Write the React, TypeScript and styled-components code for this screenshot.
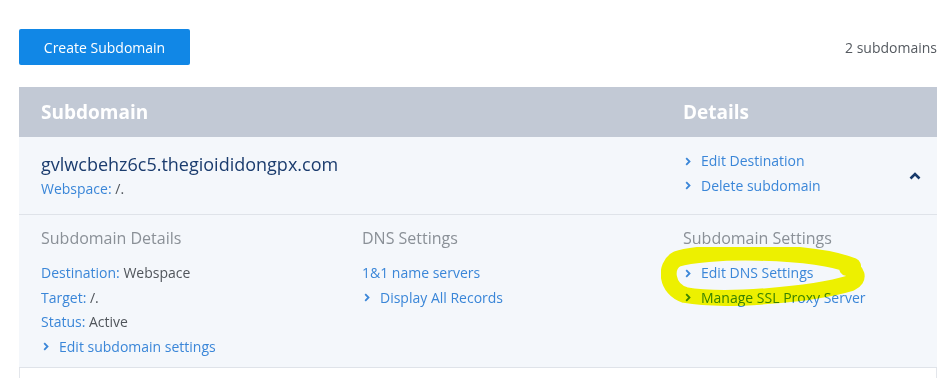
import * as React from "react";
import styled, { createGlobalStyle } from "styled-components";

const GlobalStyle = createGlobalStyle`
  body {
    margin: 0;
    background: #ffffff;
    font-family: "Open Sans", "Liberation Sans", sans-serif;
  }
`;

const LINK = "#3a86d8";

const Chevron: React.FC = () => (
  <svg width="6" height="9" viewBox="0 0 6 9">
    <path d="M1.2 1.2 L4.5 4.5 L1.2 7.8" fill="none" stroke={LINK} strokeWidth="1.8" />
  </svg>
);

const App: React.FC = () => {
  return (
    <Page>
      <GlobalStyle />
      <Toolbar>
        <CreateButton>Create Subdomain</CreateButton>
        <Count>2 subdomains</Count>
      </Toolbar>
      <Table>
        <HeaderRow>
          <HeaderCell>Subdomain</HeaderCell>
          <HeaderCell>Details</HeaderCell>
        </HeaderRow>
        <Row>
          <NameCell>
            <DomainName>gvlwcbehz6c5.thegioididongpx.com</DomainName>
            <Line>
              <Label>Webspace:</Label> <Value>/.</Value>
            </Line>
          </NameCell>
          <DetailsCell>
            <LinkList>
              <ArrowLink>
                <Chevron />
                Edit Destination
              </ArrowLink>
              <ArrowLink>
                <Chevron />
                Delete subdomain
              </ArrowLink>
            </LinkList>
            <Toggle>
              <svg width="12" height="8" viewBox="0 0 12 8">
                <path d="M1.5 6.5 L6 2 L10.5 6.5" fill="none" stroke="#183a6b" strokeWidth="2.6" />
              </svg>
            </Toggle>
          </DetailsCell>
        </Row>
        <Expanded>
          <Column>
            <ColumnTitle>Subdomain Details</ColumnTitle>
            <Line>
              <Label>Destination:</Label> <Value>Webspace</Value>
            </Line>
            <Line>
              <Label>Target:</Label> <Value>/.</Value>
            </Line>
            <Line>
              <Label>Status:</Label> <Value>Active</Value>
            </Line>
            <ArrowLink>
              <Chevron />
              Edit subdomain settings
            </ArrowLink>
          </Column>
          <Column>
            <ColumnTitle>DNS Settings</ColumnTitle>
            <Line>
              <Label>1&amp;1 name servers</Label>
            </Line>
            <ArrowLink>
              <Chevron />
              Display All Records
            </ArrowLink>
          </Column>
          <Column>
            <ColumnTitle>Subdomain Settings</ColumnTitle>
            <ArrowLink>
              <Chevron />
              Edit DNS Settings
            </ArrowLink>
            <ArrowLink>
              <Chevron />
              Manage SSL Proxy Server
            </ArrowLink>
            <Highlight width="210" height="70" viewBox="0 0 210 70">
              <path
                d="M192 19 C150 2, 40 3, 16 12 C3 19, 5 42, 24 48 C62 55, 150 48, 190 36 C199 32, 197 23, 186 21"
                fill="none"
                stroke="#f8f800"
                strokeWidth="16"
                strokeLinecap="round"
                strokeLinejoin="round"
              />
            </Highlight>
          </Column>
        </Expanded>
        <NextRow />
      </Table>
    </Page>
  );
};

//Styled components

const Page = styled.div`
  padding: 29px 3px 0 19px;
  width: 918px;
`;

const Toolbar = styled.div`
  display: flex;
  justify-content: space-between;
  align-items: center;
  margin-bottom: 22px;
`;

const CreateButton = styled.button`
  width: 171px;
  height: 36px;
  border: none;
  border-radius: 2px;
  background: #1187e6;
  color: #ffffff;
  font-family: "Open Sans", "Liberation Sans", sans-serif;
  font-size: 14px;
  cursor: pointer;
`;

const Count = styled.span`
  font-size: 14px;
  color: #555a60;
`;

const Table = styled.div`
  display: flex;
  flex-direction: column;
`;

const grid = `
  display: grid;
  grid-template-columns: 321px 321px 1fr;
  padding-left: 22px;
`;

const HeaderRow = styled.div`
  ${grid};
  grid-template-columns: 642px 1fr;
  height: 50px;
  align-items: center;
  background: #c2c9d5;
`;

const HeaderCell = styled.div`
  font-size: 19px;
  font-weight: 700;
  color: #ffffff;
`;

const Row = styled.div`
  ${grid};
  grid-template-columns: 642px 1fr;
  height: 77px;
  background: #f4f7fb;
  border-bottom: 1px solid #dfe3e9;
`;

const NameCell = styled.div`
  padding-top: 14px;
`;

const DomainName = styled.div`
  font-size: 18px;
  line-height: 26px;
  color: #1b3c6e;
`;

const DetailsCell = styled.div`
  display: flex;
  align-items: center;
  justify-content: space-between;
  padding-right: 16px;
`;

const LinkList = styled.div`
  display: flex;
  flex-direction: column;
  margin-top: -4px;
`;

const Toggle = styled.div`
  display: flex;
  align-items: center;
`;

const Line = styled.div`
  font-size: 14px;
  line-height: 24.5px;
`;

const Label = styled.span`
  color: ${LINK};
`;

const Value = styled.span`
  color: #50555b;
`;

const ArrowLink = styled.div`
  display: flex;
  align-items: center;
  gap: 10px;
  padding-left: 2px;
  font-size: 14px;
  line-height: 24.5px;
  color: ${LINK};
`;

const Expanded = styled.div`
  ${grid};
  height: 153px;
  box-sizing: border-box;
  padding-top: 11px;
  background: #f4f7fb;
  border-bottom: 1px solid #dfe3e9;
`;

const Column = styled.div`
  display: flex;
  flex-direction: column;
  position: relative;
`;

const ColumnTitle = styled.div`
  font-size: 16px;
  line-height: 24px;
  color: #8a9097;
  margin-bottom: 11px;
`;

const Highlight = styled.svg`
  position: absolute;
  left: -22px;
  top: 21px;
  mix-blend-mode: multiply;
  pointer-events: none;
`;

const NextRow = styled.div`
  height: 20px;
  border-left: 1px solid #e3e6eb;
  border-right: 1px solid #e3e6eb;
`;

export default App;
